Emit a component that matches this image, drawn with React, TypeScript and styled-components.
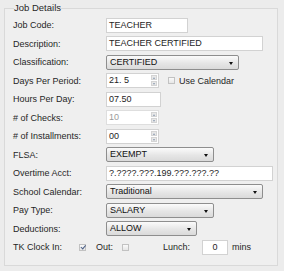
import styled, { createGlobalStyle } from "styled-components";

const GlobalStyle = createGlobalStyle`
  html, body {
    margin: 0;
    padding: 0;
    background: #ececec;
  }
  body {
    font-family: "Liberation Sans", Arial, sans-serif;
    font-size: 9px;
    color: #262626;
  }
`;

const Page = styled.div`
  width: 284px;
  height: 271px;
  box-sizing: border-box;
  padding: 2px 6px 5px 4px;
`;

const Fieldset = styled.fieldset`
  margin: 0;
  height: 100%;
  box-sizing: border-box;
  border: 1px solid #d9d9d9;
  background: #efefef;
  padding: 2px 0 0 8px;
`;

const Legend = styled.legend`
  padding: 0;
  margin-left: 1px;
  font-size: 9.5px;
  line-height: 12px;
  color: #262626;
`;

const Form = styled.div`
  display: grid;
  grid-template-columns: 93px 1fr;
  grid-auto-rows: 18.5px;
  align-items: center;
`;

const Label = styled.span`
  white-space: nowrap;
`;

const Line = styled.div`
  display: flex;
  align-items: center;
  white-space: nowrap;
  height: 18.5px;
`;

const TextBox = styled.div<{ $w: number; $muted?: boolean; $center?: boolean }>`
  position: relative;
  box-sizing: border-box;
  width: ${(p) => p.$w}px;
  height: 15px;
  line-height: 13px;
  background: #fff;
  border: 1px solid ${(p) => (p.$muted ? "#dedede" : "#d2d2d2")};
  padding: 0 2px;
  color: ${(p) => (p.$muted ? "#9a9a9a" : "#1e1e1e")};
  text-align: ${(p) => (p.$center ? "center" : "left")};
  overflow: hidden;
  white-space: nowrap;
`;

const Spinner = styled.div`
  position: absolute;
  right: 1px;
  top: 1px;
  bottom: 1px;
  width: 6px;
  display: flex;
  flex-direction: column;
  gap: 1px;
`;

const SpinHalf = styled.div<{ $down?: boolean }>`
  flex: 1;
  background: #e8e8e8;
  border: 1px solid #d4d4d4;
  box-sizing: border-box;
  position: relative;
  &::after {
    content: "";
    position: absolute;
    left: 1px;
    top: 1px;
    border-left: 1.5px solid transparent;
    border-right: 1.5px solid transparent;
    ${(p) =>
      p.$down
        ? "border-top: 2px solid #8a9ab0;"
        : "border-bottom: 2px solid #8a9ab0;"}
  }
`;

const Select = styled.div<{ $w: number }>`
  position: relative;
  box-sizing: border-box;
  width: ${(p) => p.$w}px;
  height: 15px;
  line-height: 13px;
  border: 1px solid #8e8e8e;
  border-radius: 2px;
  background: linear-gradient(#fbfbfb, #e6e6e6 55%, #dadada);
  padding: 0 3px;
  color: #111;
  white-space: nowrap;
  &::after {
    content: "";
    position: absolute;
    right: 5px;
    top: 6px;
    border-left: 2px solid transparent;
    border-right: 2px solid transparent;
    border-top: 3px solid #111;
  }
`;

const Check = styled.span<{ $on?: boolean }>`
  display: inline-block;
  flex: none;
  box-sizing: border-box;
  width: 7px;
  height: 7px;
  border: 1px solid #c2c2c2;
  background: linear-gradient(#fafafa, #e6e6e6);
  position: relative;
  ${(p) =>
    p.$on
      ? `&::after {
    content: "";
    position: absolute;
    left: 1.5px;
    top: -0.5px;
    width: 1.5px;
    height: 3.5px;
    border-right: 1.2px solid #4b5f86;
    border-bottom: 1.2px solid #4b5f86;
    transform: rotate(40deg);
  }`
      : ""}
`;

const Gap = styled.span<{ $w: number }>`
  display: inline-block;
  flex: none;
  width: ${(p) => p.$w}px;
`;

const Field = ({ w, value, muted, spin }: { w: number; value: string; muted?: boolean; spin?: boolean }) => (
  <TextBox $w={w} $muted={muted}>
    {value}
    {spin && (
      <Spinner>
        <SpinHalf />
        <SpinHalf $down />
      </Spinner>
    )}
  </TextBox>
);

export default function App() {
  return (
    <>
      <GlobalStyle />
      <Page>
        <Fieldset>
          <Legend>Job Details</Legend>
          <Form>
            <Label>Job Code:</Label>
            <Field w={82} value="TEACHER" />

            <Label>Description:</Label>
            <Field w={157} value="TEACHER CERTIFIED" />

            <Label>Classification:</Label>
            <Select $w={133}>CERTIFIED</Select>

            <Label>Days Per Period:</Label>
            <Line>
              <Field w={53} value="21. 5" spin />
              <Gap $w={9} />
              <Check />
              <Gap $w={4} />
              <span>Use Calendar</span>
            </Line>

            <Label>Hours Per Day:</Label>
            <Field w={55} value="07.50" />

            <Label># of Checks:</Label>
            <Field w={53} value="10" muted spin />

            <Label># of Installments:</Label>
            <Field w={53} value="00" spin />

            <Label>FLSA:</Label>
            <Select $w={108}>EXEMPT</Select>

            <Label>Overtime Acct:</Label>
            <Field w={167} value="?.????.???.199.???.???.??" />

            <Label>School Calendar:</Label>
            <Select $w={157}>Traditional</Select>

            <Label>Pay Type:</Label>
            <Select $w={108}>SALARY</Select>

            <Label>Deductions:</Label>
            <Select $w={91}>ALLOW</Select>
          </Form>
          <Line>
            <Label>TK Clock In:</Label>
            <Gap $w={17} />
            <Check $on />
            <Gap $w={10} />
            <span>Out:</span>
            <Gap $w={9} />
            <Check />
            <Gap $w={34} />
            <span>Lunch:</span>
            <Gap $w={12} />
            <TextBox $w={26} $center>
              0
            </TextBox>
            <Gap $w={4} />
            <span>mins</span>
          </Line>
        </Fieldset>
      </Page>
    </>
  );
}
